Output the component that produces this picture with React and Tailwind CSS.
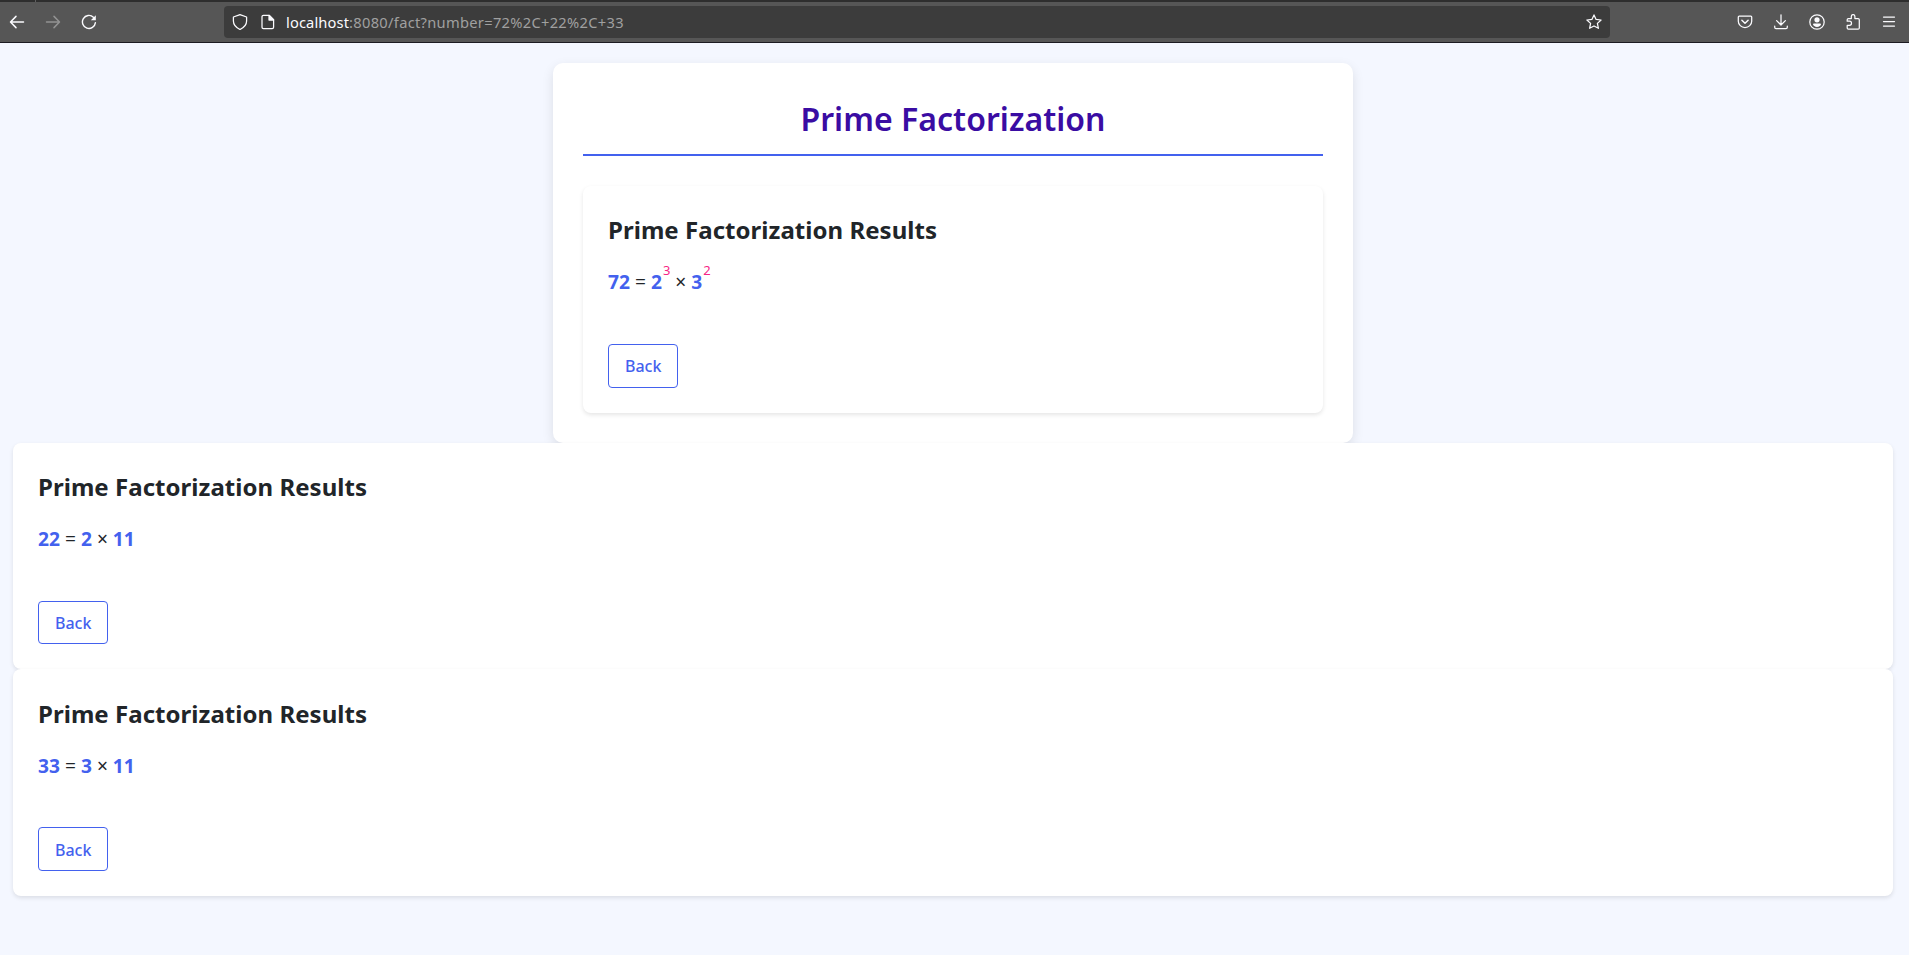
import React from "react";

const iconBase = {
  width: 16,
  height: 16,
  viewBox: "0 0 16 16",
  fill: "none",
  stroke: "currentColor",
  strokeWidth: 1.25,
  strokeLinecap: "round",
  strokeLinejoin: "round",
};

function Icon({ children, className = "" }) {
  return (
    <svg {...iconBase} className={"shrink-0 " + className}>
      {children}
    </svg>
  );
}

function BrowserBar() {
  return (
    <header className="flex h-[43px] flex-col border-b border-[#1c1b22] bg-[#565656] text-[#fbfbfe]">
      <div className="h-0.5 shrink-0 bg-[#2e2e2e] pl-[35px]">
        <div className="h-0.5 w-px bg-[#606060]" />
      </div>
      <div className="flex flex-1 items-center">
        <div className="flex w-[224px] shrink-0 items-center gap-5 pl-[9px]">
          <Icon><path d="M14.500 8H1.600M7 2.400 1.500 8 7 13.600" strokeWidth="1.5" /></Icon>
          <Icon className="text-[#929292]"><path d="M1.500 8h12.900M9 2.400 14.500 8 9 13.600" strokeWidth="1.5" /></Icon>
          <Icon>
            <path d="M14.400 8.600A6.500 6.500 0 1 1 12.400 3.200" strokeWidth="1.4" />
            <path d="M14.800 1.200v5H9.800z" fill="currentColor" stroke="none" />
          </Icon>
        </div>
        <div className="flex h-8 w-[1386px] shrink-0 items-center rounded-[4px] bg-[#3c3c3c] px-2">
          <Icon><path d="M8 .6 14.600 3v4c0 3.400-2.500 6.500-6.600 8.500-4.100-2-6.600-5.100-6.600-8.500V3z" /></Icon>
          <Icon className="ml-3">
            <path d="M3.400 1.400h6l4.200 4.200v7.600c0 .8-.6 1.400-1.400 1.400H3.400c-.8 0-1.400-.6-1.400-1.400V2.800c0-.8.6-1.400 1.400-1.400z" />
            <path d="M9 1.400V6h4.600z" fill="currentColor" />
          </Icon>
          <span className="ml-[10px] flex-1 font-['Noto_Sans',sans-serif] text-[14.67px] tracking-[0.3px] whitespace-nowrap text-[#a0a0a0]">
            <span className="tracking-[0.13px] text-[#fbfbfe]">localhost</span>:8080/fact?number=72%2C+22%2C+33
          </span>
          <Icon><path d="m8 .9 2.100 4.500 5 .6-3.700 3.400 1 4.900L8 12l-4.400 2.300 1-4.900L.9 6l5-.6z" /></Icon>
        </div>
        <div className="ml-auto flex items-center gap-5 pr-3">
          <Icon>
            <path d="M2.200 2h11.600c.5 0 .9.400.9.900v4.300a6.700 6.300 0 0 1-13.400 0V2.900c0-.5.4-.9.9-.9z" />
            <path d="m4.900 6.300 3.100 2.900 3.100-2.900" strokeWidth="1.5" />
          </Icon>
          <Icon><path d="M8 .8v10M3.600 6.600 8 11l4.400-4.400M1.700 12v1.300c0 .8.500 1.300 1.300 1.300h10c.8 0 1.300-.5 1.300-1.300V12" /></Icon>
          <Icon>
            <circle cx="8" cy="8" r="7.2" />
            <circle cx="8" cy="5.8" r="2.6" fill="currentColor" stroke="none" />
            <path d="M5.200 9.400h5.600c.7 0 1.200.5 1.200 1.200 0 1.100-2 2.400-4 2.400s-4-1.300-4-2.400c0-.7.5-1.200 1.200-1.200z" fill="currentColor" stroke="none" />
          </Icon>
          <Icon><path d="M2.200 7.200V5.700c0-.7.500-1.200 1.200-1.200h2.900V2.400a1.800 1.800 0 0 1 3.600 0v2.100h3.200c.7 0 1.200.5 1.200 1.200v8.300c0 .7-.5 1.200-1.200 1.200H3.400c-.7 0-1.200-.5-1.200-1.200v-2.600h2.200a2 2 0 0 0 0-4.200z" /></Icon>
          <Icon><path d="M2.500 3h11M2.500 7.500h11M2.500 12h11" /></Icon>
        </div>
      </div>
    </header>
  );
}

function ResultCard({ number, factors }) {
  return (
    <section className="rounded-[8px] bg-white px-[25px] pt-[25.25px] pb-[25px] shadow-[0_2px_4px_rgba(0,0,0,0.1)]">
      <h2 className="text-2xl leading-[38.4px] font-bold tracking-[0.04px]">Prime Factorization Results</h2>
      <div className="mt-[15.6px] h-[34.56px] text-[19.2px] leading-[34.56px]">
        <span className="font-bold text-[#4361ee]">{number}</span>
        {" = "}
        {factors.map(([base, power], i) => (
          <React.Fragment key={base}>
            {i > 0 && " × "}
            <span className="font-bold text-[#4361ee]">{base}</span>
            {power && <sup className="-top-[1.1em] ml-px text-[13px] leading-none text-[#f72585]">{power}</sup>}
          </React.Fragment>
        ))}
      </div>
      <button className="mt-[44.19px] block h-[43.6px] rounded-[4px] border border-[#4361ee] px-4 pt-[9.25px] pb-[6.75px] text-base leading-[25.6px] font-medium text-[#4361ee]">
        Back
      </button>
    </section>
  );
}

export default function App() {
  return (
    <div className="min-h-[955px] bg-[#f4f7ff] font-['Noto_Sans',sans-serif] text-[#212529]">
      <BrowserBar />
      <main className="pt-5 pr-4 pl-[13px]">
        <div className="ml-[540px] w-[800px] rounded-[10px] bg-white p-[30px] shadow-[0_4px_12px_rgba(0,0,0,0.1)]">
          <h1 className="mb-[30px] border-b-2 border-[#4361ee] pb-[10px] text-center text-[32px] leading-[51.2px] font-semibold tracking-[0.03px] text-[#3a0ca3]">
            Prime Factorization
          </h1>
          <ResultCard number={72} factors={[[2, 3], [3, 2]]} />
        </div>
        <ResultCard number={22} factors={[[2], [11]]} />
        <ResultCard number={33} factors={[[3], [11]]} />
      </main>
    </div>
  );
}
